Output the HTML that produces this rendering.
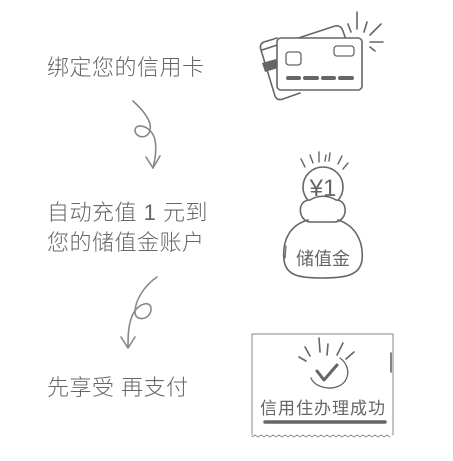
<!DOCTYPE html>
<html><head><meta charset="utf-8"><style>
body{margin:0;width:453px;height:461px;background:#fff;overflow:hidden;position:relative;font-family:"Liberation Sans","Noto Sans CJK SC",sans-serif;color:#666}
.t{position:absolute;left:47px;font-size:22px;line-height:30px;font-weight:300;letter-spacing:0.5px;white-space:nowrap}
svg{position:absolute;left:0;top:0}
</style></head><body>
<div class="t" style="top:53px">绑定您的信用卡</div>
<div class="t" style="top:198px">自动充值 1 元到</div>
<div class="t" style="top:228px">您的储值金账户</div>
<div class="t" style="top:373px">先享受 再支付</div>
<svg width="453" height="461" fill="none" stroke="#666" stroke-linecap="round" stroke-linejoin="round">
<path d="M133 101 C145 112 152 122 150 130 C148 140 135 138 135 130 C136 122 152 126 155 140 C157 150 155 160 153 168" stroke="#888" stroke-width="1.6"/>
<path d="M146 157 L153 168 L160 156" stroke="#888" stroke-width="1.6"/>
<path d="M157 277 C145 285 135 300 135 312 C135 322 150 320 151 310 C152 300 138 302 132 316 C128 326 128 338 128 348" stroke="#888" stroke-width="1.6"/>
<path d="M121 337 L128 348 L135 337" stroke="#888" stroke-width="1.6"/>
<path d="M262 50 L335 26 Q341 25 343 31 L346 40" stroke-width="1.6"/>
<path d="M277 38 L264 42 Q259 44 261 50 L275 96 Q277 101 283 99 L300 93" stroke-width="1.6"/>
<path d="M262 63 L276 59 L278 68 L265 72 Z" fill="#666" stroke="none"/>
<rect x="277" y="38" width="85" height="52" rx="4" fill="#fff" stroke-width="1.6"/>
<rect x="286" y="52" width="15" height="13" rx="3" stroke-width="1.3"/>
<rect x="334" y="46" width="20" height="10" rx="3" stroke-width="1.3"/>
<path d="M288 78 H299 M305 78 H317 M323 78 H334 M340 78 H352" stroke-width="4"/>
<path d="M357 12 V29 M348 24 L351 32 M367 22 L364 32 M381 24 L370 35 M370 42 H383 M370 47 L375 51" stroke-width="1.6"/>
<!-- money bag -->
<path d="M301 159 L305 167 M310 155 L313 163 M319 152 L319 162 M330 153 L329 161 M342 156 L338 164 M348 163 L343 169 M326 155 L325 161" stroke-width="1.4"/>
<circle cx="323" cy="187" r="20" stroke-width="1.6"/>
<text x="323" y="196" text-anchor="middle" font-size="24" fill="#666" stroke="none" font-family="Liberation Sans,sans-serif">¥1</text>
<path d="M311 222 C298 222 296 200 310 200 C318 195 328 195 336 200 C349 200 348 222 334 222 Z" fill="#fff" stroke-width="1.6"/>
<path d="M308 220 C290 225 282 240 284 260 C286 276 300 278 322 278 C344 278 360 276 362 260 C364 240 354 225 338 220" stroke-width="1.6"/>
<path d="M286 246 L285 258" stroke-width="1.2"/>
<text x="323" y="265" text-anchor="middle" font-size="18" fill="#666" stroke="none" font-family="Liberation Sans,Noto Sans CJK SC,sans-serif">储值金</text>
<!-- receipt -->
<path d="M393 435 V334 H252 V435" stroke="#888" stroke-width="1"/>
<path d="M252 437 l3 -2 l3 2 l3 -2 l3 2 l3 -2 l3 2 l3 -2 l3 2 l3 -2 l3 2 l3 -2 l3 2 l3 -2 l3 2 l3 -2 l3 2 l3 -2 l3 2 l3 -2 l3 2 l3 -2 l3 2 l3 -2 l3 2 l3 -2 l3 2 l3 -2 l3 2 l3 -2 l3 2 l3 -2 l3 2 l3 -2 l3 2 l3 -2 l3 2 l3 -2 l3 2 l3 -2 l3 2 l3 -2 l3 2 l3 -2 l3 2 l3 -2 l3 2" stroke="#888" stroke-width="0.8"/>
<path d="M391 353 V372" stroke-width="1.6"/>
<path d="M299 357 L306 361 M305 347 L310 356 M319 338 L320 352 M328 344 L327 355 M343 343 L337 355 M354 352 L346 359" stroke-width="1.6"/>
<path d="M340 358 C351 366 350 381 339 386 C328 391 314 386 311 378" stroke-width="1.3"/>
<path d="M317 371 L324 380 L337 365" stroke-width="3"/>
<text x="323" y="414" text-anchor="middle" font-size="17" fill="#666" stroke="none" font-family="Liberation Sans,Noto Sans CJK SC,sans-serif" letter-spacing="1">信用住办理成功</text>
<path d="M265 422 H385" stroke-width="3.5"/>
</svg>
</body></html>
